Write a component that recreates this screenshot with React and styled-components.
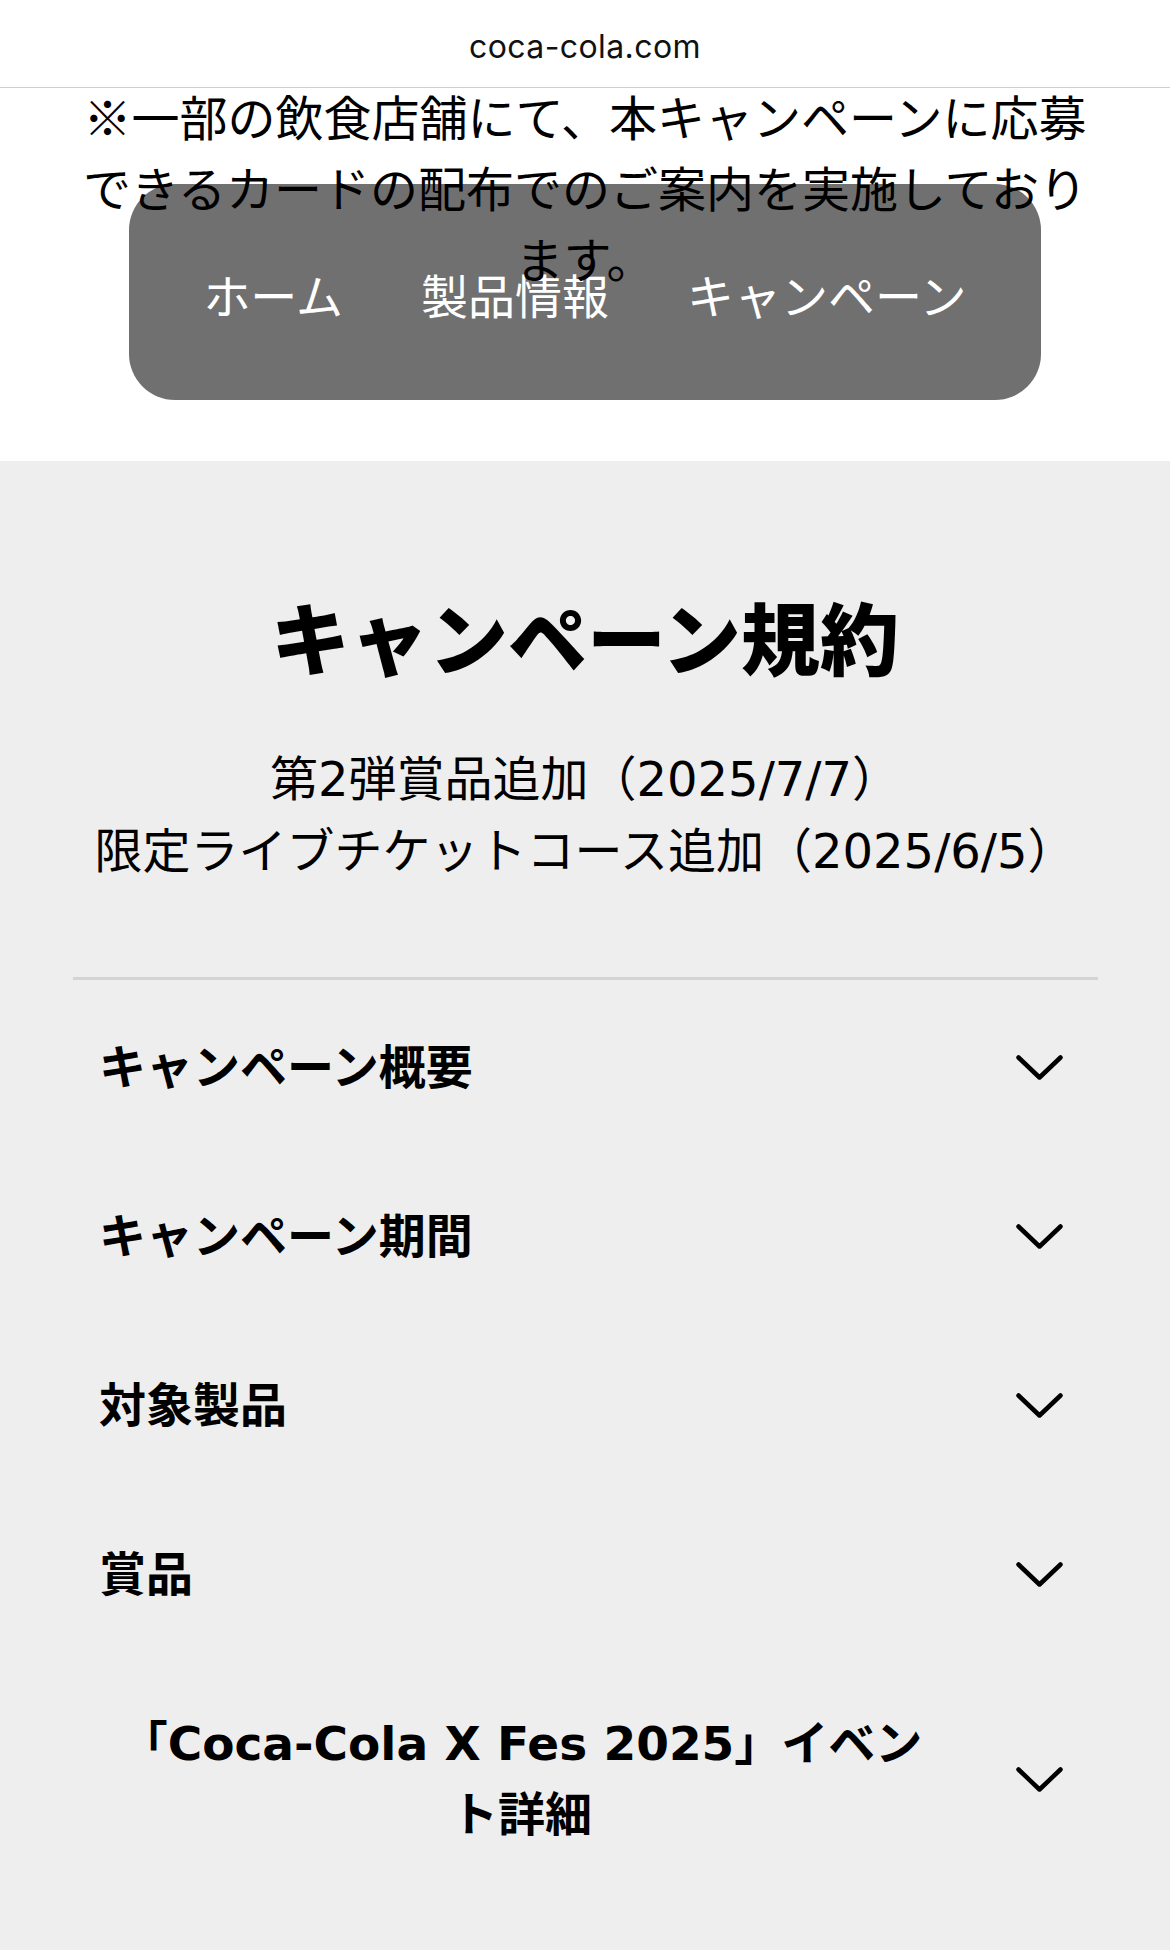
import React from "react";
import styled, { createGlobalStyle } from "styled-components";

const GlobalStyle = createGlobalStyle`
  html, body {
    margin: 0;
    padding: 0;
    background: #eeeeee;
  }
  body {
    font-family: "Noto Sans CJK JP", sans-serif;
    color: #000;
    -webkit-font-smoothing: antialiased;
  }
  * { box-sizing: border-box; }
`;

const Page = styled.div`
  position: relative;
  width: 1170px;
  min-height: 1950px;
  background: #eeeeee;
`;

const Header = styled.header`
  height: 88px;
  padding-top: 6px;
  display: flex;
  align-items: center;
  justify-content: center;
  background: #ffffff;
  border-bottom: 1px solid #cfcfcf;
  font-family: "Inter", "Liberation Sans", sans-serif;
  font-size: 32px;
  letter-spacing: 0.4px;
  color: #111;
  position: relative;
  z-index: 2;
`;

const TopSection = styled.section`
  background: #ffffff;
  padding: 0 60px 168px;
`;

const Notice = styled.p`
  position: relative;
  z-index: 1;
  margin: -8px 0 0;
  font-family: "Noto Sans CJK JP", sans-serif;
  font-size: 48px;
  line-height: 71px;
  text-align: center;
  color: #000;
`;

const NavPill = styled.nav`
  position: absolute;
  z-index: 0;
  top: 184px;
  left: 129px;
  width: 912px;
  height: 216px;
  border-radius: 46px;
  background: #707070;
  display: flex;
  align-items: center;
  justify-content: center;
  gap: 78px;
`;

const NavItem = styled.a`
  font-family: "Noto Sans CJK JP", sans-serif;
  font-size: 47px;
  line-height: 1;
  color: #ffffff;
  text-decoration: none;
  margin-top: 2px;
`;

const Main = styled.main`
  background: #eeeeee;
  padding-top: 125px;
  padding-bottom: 50px;
`;

const Title = styled.h1`
  margin: 0;
  font-family: "Noto Sans CJK JP", sans-serif;
  font-weight: 900;
  font-size: 79px;
  line-height: 100px;
  text-align: center;
`;

const Updates = styled.div`
  margin-top: 57px;
  text-align: center;
  font-family: "DejaVu Sans", "Noto Sans CJK JP", sans-serif;
  font-size: 48px;
  line-height: 72px;
`;

const UpdateLine = styled.div``;

const Accordion = styled.div`
  margin: 90px 72px 0 73px;
  border-top: 3px solid #d4d4d4;
`;

const Row = styled.button`
  width: 100%;
  display: flex;
  align-items: center;
  justify-content: space-between;
  gap: 72px;
  padding: 52px 35px 46px 26px;
  background: transparent;
  border: 0;
  cursor: pointer;
  color: #000;
  text-align: left;
  font: inherit;
`;

const RowTitle = styled.span`
  flex: 0 1 auto;
  font-family: "DejaVu Sans", "Noto Sans CJK JP", sans-serif;
  font-weight: 700;
  font-size: 47px;
  line-height: 71px;
  text-align: center;
`;

const Chevron = styled.svg`
  flex: 0 0 auto;
  width: 47px;
  height: 25px;
  display: block;
`;

const ChevronIcon = () => (
  <Chevron viewBox="0 0 47 25" fill="none">
    <polyline
      points="2.5,2.5 23.5,22.5 44.5,2.5"
      stroke="#000"
      strokeWidth="4.5"
      strokeLinecap="round"
      strokeLinejoin="round"
    />
  </Chevron>
);

const items = [
  "キャンペーン概要",
  "キャンペーン期間",
  "対象製品",
  "賞品",
  "「Coca-Cola X Fes 2025」イベント詳細",
];

export default function App() {
  return (
    <>
      <GlobalStyle />
      <Page>
        <Header>coca-cola.com</Header>
        <TopSection>
          <Notice>
            ※一部の飲食店舗にて、本キャンペーンに応募できるカードの配布でのご案内を実施しております。
          </Notice>
        </TopSection>
        <NavPill>
          <NavItem href="#">ホーム</NavItem>
          <NavItem href="#">製品情報</NavItem>
          <NavItem href="#">キャンペーン</NavItem>
        </NavPill>
        <Main>
          <Title>キャンペーン規約</Title>
          <Updates>
            <UpdateLine>第2弾賞品追加（2025/7/7）</UpdateLine>
            <UpdateLine>限定ライブチケットコース追加（2025/6/5）</UpdateLine>
          </Updates>
          <Accordion>
            {items.map((t) => (
              <Row key={t} type="button">
                <RowTitle>{t}</RowTitle>
                <ChevronIcon />
              </Row>
            ))}
          </Accordion>
        </Main>
      </Page>
    </>
  );
}
